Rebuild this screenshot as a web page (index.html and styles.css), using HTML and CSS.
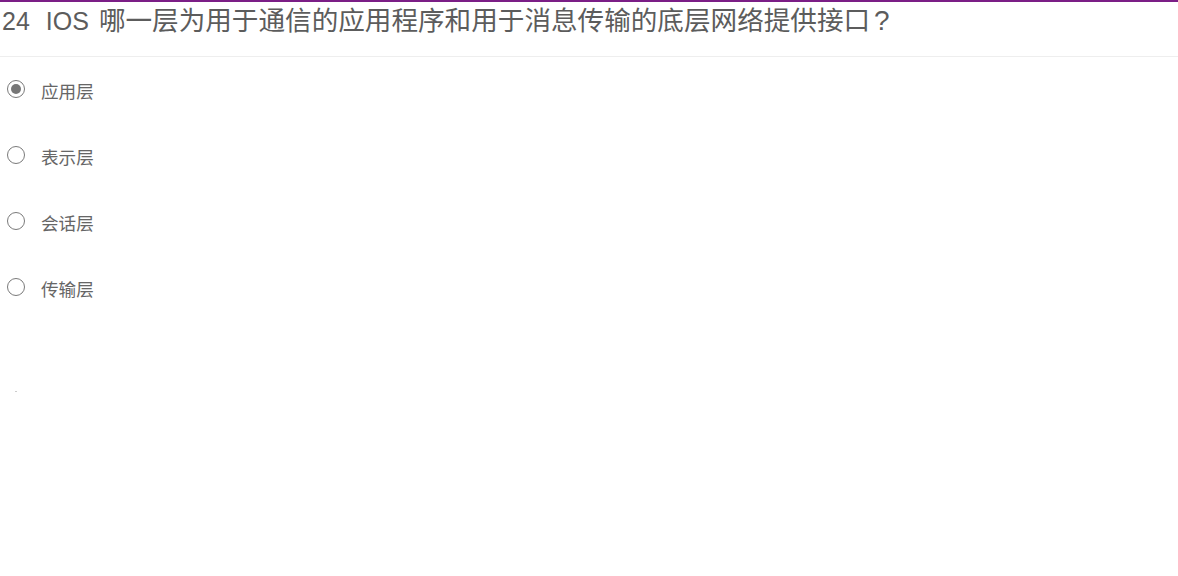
FILE: index.html
```html
<!DOCTYPE html>
<html lang="zh-CN">
<head>
<meta charset="utf-8">
<title>IOS</title>
<link rel="stylesheet" href="styles.css">
</head>
<body>
<div class="page">
  <h1 class="question"><span class="num">24</span><span class="code">IOS</span><span class="cjk">哪一层为用于通信的应用程序和用于消息传输的底层网络提供接口</span><span class="mark">?</span></h1>
  <ul class="options">
    <li class="option"><span class="radio checked"></span><span class="label">应用层</span></li>
    <li class="option"><span class="radio"></span><span class="label">表示层</span></li>
    <li class="option"><span class="radio"></span><span class="label">会话层</span></li>
    <li class="option"><span class="radio"></span><span class="label">传输层</span></li>
  </ul>
  <div class="foot"><span class="dot"></span></div>
</div>
</body>
</html>
```

FILE: styles.css
```css
html, body {
  margin: 0;
  padding: 0;
  background: #fff;
}
body {
  border-top: 2px solid #7b1e86;
  font-family: "Liberation Sans", "Noto Sans CJK SC", sans-serif;
}
.question {
  margin: 0;
  padding: 2px 0 18px 2px;
  height: 34px;
  line-height: 34px;
  font-size: 25px;
  font-weight: normal;
  color: #5c5c5c;
  border-bottom: 1px solid #eeeeee;
  white-space: nowrap;
}
.question .num {
  margin-right: 16px;
}
.question .code {
  margin-right: 10px;
}
.question .cjk {
  font-size: 26.6px;
}
.question .mark {
  font-size: 28px;
  margin-left: 4px;
}
.options {
  list-style: none;
  margin: 0;
  padding: 0;
}
.option {
  height: 66px;
  display: flex;
  align-items: center;
  padding-left: 7px;
}
.radio {
  box-sizing: border-box;
  width: 18px;
  height: 18px;
  border: 1.5px solid #7a7a7a;
  border-radius: 50%;
  display: flex;
  align-items: center;
  justify-content: center;
  margin-top: -3px;
}
.radio.checked::after {
  content: "";
  width: 10px;
  height: 10px;
  border-radius: 50%;
  background: #777;
}
.label {
  margin-left: 16px;
  font-size: 17.6px;
  color: #666;
  margin-top: 1px;
}
.foot {
  padding: 70px 0 0 15px;
}
.dot {
  display: block;
  width: 2px;
  height: 1px;
  background: #ccc;
}
```
